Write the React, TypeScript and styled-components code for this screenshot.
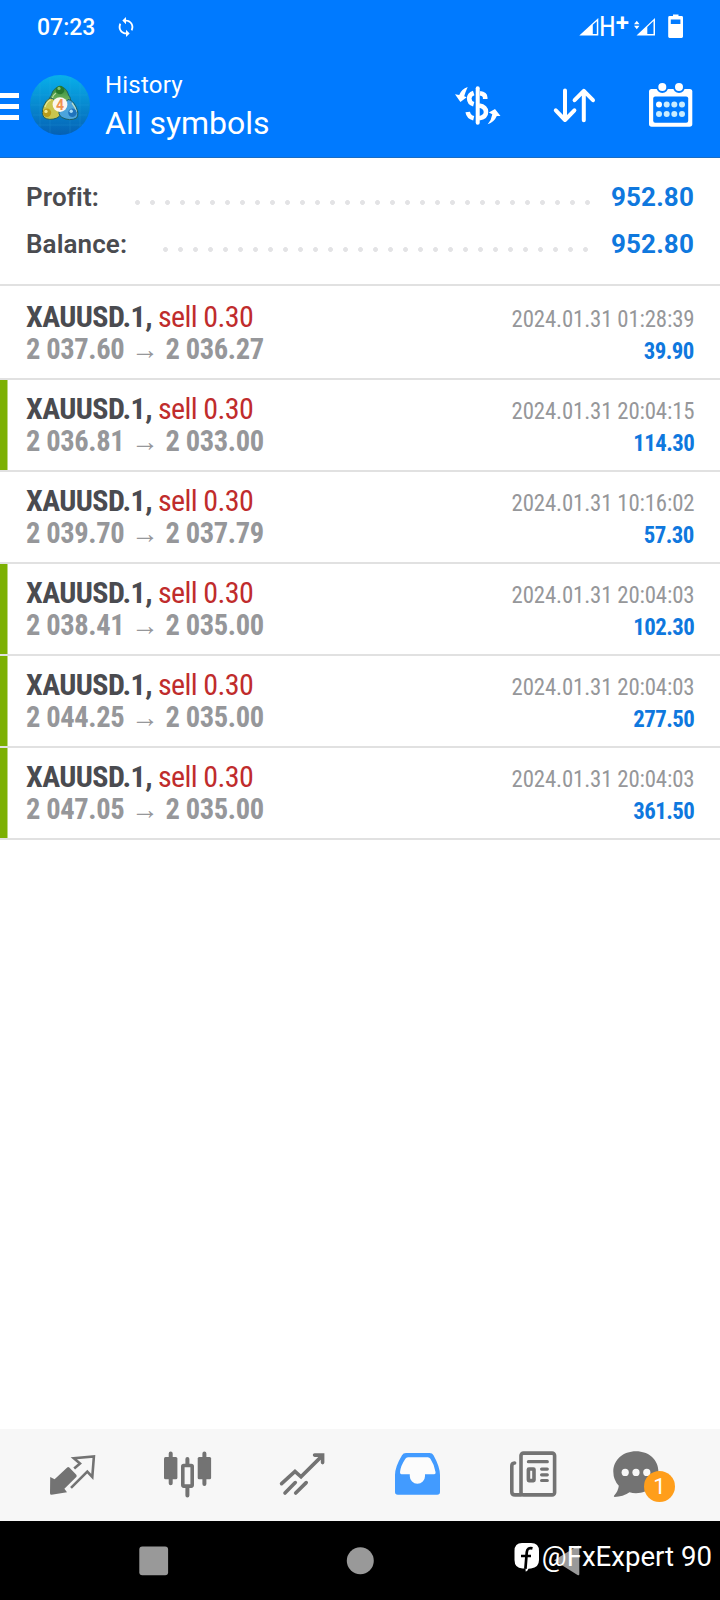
import React from 'react';
import styled, { createGlobalStyle } from 'styled-components';
import { MdSync } from 'react-icons/md';

const GlobalStyle = createGlobalStyle`
  * { box-sizing: border-box; }
  body { margin: 0; background: #fff; font-family: Roboto, "Liberation Sans", sans-serif; }
  svg { display: block; flex: none; overflow: visible; }
`;

const Screen = styled.div`
  display: flex;
  flex-direction: column;
  width: 720px;
  height: 1600px;
  overflow: hidden;
  background: #fff;
`;

/* ---------- header ---------- */

const Header = styled.header`
  height: 158px;
  background: #007aff;
  border-bottom: 1px solid #1a6dc4;
  color: #fff;
`;

const StatusBar = styled.div`
  display: flex;
  align-items: center;
  height: 54px;
  padding: 0 36px 0 37px;
`;

const Clock = styled.span`
  padding-top: 2px;
  font-size: 23px;
  font-weight: 500;
  line-height: 52px;
  width: 78px;
`;

const StatusIcons = styled.div`
  display: flex;
  align-items: center;
  margin-left: auto;
`;

const NetworkType = styled.span`
  display: flex;
  align-items: flex-start;
  width: 34px;
  font-family: "Roboto Condensed", Roboto, sans-serif;
  font-size: 27px;
  line-height: 30px;
`;

const NetworkLetter = styled.span`
  margin-left: -2px;
`;

const NetworkPlus = styled.span`
  font-family: Roboto, sans-serif;
  font-size: 24px;
  font-weight: 600;
  line-height: 23px;
`;

const BatteryGap = styled.span`
  margin-left: 11px;
`;

const Toolbar = styled.div`
  display: flex;
  align-items: flex-start;
  height: 103px;
  padding-right: 26px;
`;

const Hamburger = styled.button`
  display: flex;
  flex-direction: column;
  gap: 6px;
  width: 19px;
  margin: 39px 11px 0 0;
  padding: 0;
  border: 0;
  background: none;
`;

const HamburgerBar = styled.span`
  height: 5px;
  background: #fff;
`;

const Logo = styled.div`
  margin-top: 21.4px;
`;

const Titles = styled.div`
  margin: 17px auto 0 15px;
`;

const Subtitle = styled.div`
  font-size: 24px;
  line-height: 28px;
  letter-spacing: 0.2px;
  margin-bottom: 4px;
`;

const Title = styled.div`
  font-size: 32px;
  line-height: 40px;
`;

const Actions = styled.div`
  display: flex;
  align-items: center;
  gap: 49px;
  padding-top: 28px;
`;

/* ---------- summary ---------- */

const Summary = styled.section`
  height: 128px;
  padding: 16px 26px 0;
  border-bottom: 2px solid #e1e1e1;
`;

const SummaryRow = styled.div`
  display: flex;
  height: 47px;
  font-size: 26px;
  line-height: 47px;
`;

const SummaryLabel = styled.span`
  color: #4a4b50;
  font-weight: 600;
  letter-spacing: 0.1px;
`;

const Dots = styled.span`
  flex: 1;
  margin: 21px 16px 0 31px;
  height: 15px;
  background: radial-gradient(circle at 50% 50%, #e3e3e5 2.1px, transparent 2.8px) 0 0 / 15px 15px repeat-x;
`;

const SummaryValue = styled.span`
  color: #0f78de;
  font-weight: 700;
  letter-spacing: 0.15px;
`;

/* ---------- deals ---------- */

const Deal = styled.article<{ $marked: boolean; $first: boolean }>`
  height: ${(p) => (p.$first ? 94 : 92)}px;
  padding: ${(p) => (p.$first ? 15 : 13)}px 26px 0;
  border-bottom: 2px solid #e1e1e1;
  background: ${(p) => (p.$marked ? 'linear-gradient(#7cb003, #7cb003) 0 0 / 7.5px 100% no-repeat' : 'none')};
  font-family: "Roboto Condensed", Roboto, sans-serif;
`;

const DealLine = styled.div`
  display: flex;
  align-items: baseline;
  justify-content: space-between;
  height: 32px;
  line-height: 32px;
  font-size: 30px;
  white-space: pre;
`;

const Symbol = styled.span`
  color: #4a4b50;
  font-weight: 700;
  letter-spacing: -0.6px;
`;

const Side = styled.span`
  color: #c02c2c;
  letter-spacing: -0.6px;
  margin-left: 6px;
`;

const Prices = styled.span`
  display: flex;
  align-items: baseline;
  color: #96979a;
  font-weight: 700;
  letter-spacing: -0.4px;
  transform: scaleX(0.95);
  transform-origin: left;
`;

const PriceArrow = styled.span`
  width: 43.5px;
  font-size: 29px;
  font-weight: 400;
  text-align: center;
`;

const Time = styled.span`
  color: #96979a;
  font-size: 24px;
  letter-spacing: -0.15px;
  transform: scaleX(0.95);
  transform-origin: right;
`;

const Amount = styled.span`
  color: #0f78de;
  font-size: 24px;
  font-weight: 700;
  letter-spacing: -0.55px;
  transform: scaleX(0.95);
  transform-origin: right;
`;

/* ---------- bottom bars ---------- */

const Tabs = styled.nav`
  display: flex;
  justify-content: center;
  align-items: center;
  height: 92px;
  margin-top: auto;
  background: #f7f7f7;
`;

const Tab = styled.button`
  position: relative;
  display: flex;
  justify-content: center;
  width: 115px;
  padding: 0;
  border: 0;
  background: none;
`;

const Badge = styled.span`
  position: absolute;
  left: 54px;
  top: 21px;
  width: 31px;
  height: 31px;
  border-radius: 50%;
  background: #ff9e1b;
  color: #fff;
  font: 400 22px/32px Roboto, sans-serif;
  text-align: center;
`;

const SystemNav = styled.div`
  position: relative;
  display: flex;
  align-items: center;
  justify-content: center;
  height: 79px;
  background: #000;
`;

const SystemKey = styled.span`
  display: flex;
  justify-content: center;
  width: 206.5px;
`;

const Watermark = styled.div`
  position: absolute;
  right: 8px;
  top: 20px;
  display: flex;
  align-items: center;
  gap: 2px;
  color: #fff;
  font-size: 27.6px;
  font-weight: 400;
  line-height: 32px;
  white-space: pre;
`;

/* ---------- icons ---------- */

const SignalIcon = ({ active }: { active?: boolean }) => (
  <svg width="22" height="20" viewBox="0 0 22 20" fill="#fff">
    {active ? (
      <>
        <path d="M1.5 18.6L20 1V18.6ZM12.3 10V17H18.5V4Z" fillRule="evenodd" />
        <path d="M-1 7.3L1.8 3.8L4.5 7.3ZM-1 8.8H4.5L1.8 12.3Z" />
      </>
    ) : (
      <path d="M.3 18.6L19.3 1V18.6ZM13.8 7.8V17H17.8V4.2Z" fillRule="evenodd" />
    )}
  </svg>
);

const BatteryIcon = () => (
  <svg width="16" height="26" viewBox="0 0 16 26" fill="#fff">
    <path d="M5 .5H10.5V2H13.6Q15 2 15 3.4V22.6Q15 24 13.6 24H1.6Q.2 24 .2 22.6V3.4Q.2 2 1.6 2H5ZM2.8 5.6V10H12.4V5.6Z" fillRule="evenodd" />
  </svg>
);

const AppLogo = () => (
  <svg width="60" height="60" viewBox="0 0 60 60">
    <defs>
      <linearGradient id="sky" x1="0" y1="0" x2="0" y2="1">
        <stop offset="0" stopColor="#08b0ea" />
        <stop offset=".5" stopColor="#0789cf" />
        <stop offset="1" stopColor="#0560b4" />
      </linearGradient>
      <linearGradient id="green" x1="0" y1="0" x2="0" y2="1">
        <stop offset="0" stopColor="#318b3a" />
        <stop offset="1" stopColor="#93ca72" />
      </linearGradient>
    </defs>
    <circle cx="30" cy="30" r="30" fill="url(#sky)" />
    <path d="M3 20H57M1 30H59M3 40H57M7 50H53M10 8V52M20 2V58M40 2V58M50 8V52" stroke="#3fb9ee" strokeWidth=".7" opacity=".22" />
    <g stroke="#1d5f62" strokeWidth="1">
      <path d="M30 12C35 12 37.5 16 38.5 20C40.5 22 41 25 40.5 28L37 33H23L19.5 28C19 25 19.5 22 21.5 20C22.5 16 25 12 30 12Z" fill="url(#green)" />
      <path d="M20 23Q25 23 30 32Q33 40 27 43Q19 46 14 42.5Q11 38 13.5 31Q16 25 20 23Z" fill="#c8c54d" />
      <path d="M38 24.5Q43 25 46 32Q49.5 39 46.5 43Q40 46.5 32 42.5Q27 39 30 34Z" fill="#4ba4dc" />
    </g>
    <path d="M15 32Q17 26 21 25M22.5 23Q23 20 26 18M42 28Q45.5 32 46.5 37" stroke="#ecf5c5" strokeWidth="1.2" fill="none" opacity=".7" />
    <circle cx="30" cy="15" r="4.3" fill="#27792d" />
    <circle cx="29" cy="13.4" r="1.6" fill="#82c170" />
    <circle cx="17" cy="37.8" r="4.2" fill="#b79b1c" />
    <circle cx="16" cy="36.4" r="1.7" fill="#f3e98f" />
    <circle cx="42.4" cy="37.8" r="4.2" fill="#1f73bc" />
    <circle cx="41.2" cy="36.2" r="1.7" fill="#a8dcf7" />
    <circle cx="30" cy="29.6" r="7.4" fill="#fbf6ef" />
    <text x="30" y="34.6" textAnchor="middle" fontFamily="Roboto" fontWeight="700" fontSize="14" fill="#f0924f">4</text>
  </svg>
);

const CurrencyIcon = () => (
  <svg width="50" height="44" viewBox="0 0 50 44">
    <path d="M32.2 15V13.5Q32 9.8 27 9.3M20.7 9Q16.2 10.5 16.2 14.6Q16.2 19 20.7 20.2M26 21.6Q33 22.8 33 28Q33 33.3 26 34.2M14.7 28Q15.5 33 20.7 34.2" fill="none" stroke="#fff" strokeWidth="4.6" />
    <path d="M24.7 4.3V38.7" stroke="#fff" strokeWidth="4" strokeLinecap="round" />
    <path d="M14.7 3Q12.4 8 11.2 12.2L13.7 13.3L7.4 18L2 10.2L6.2 11Q8.5 5 14.7 3ZM34.7 40.3Q38.5 36 39.3 30.3L35.8 28.5L42 25L47.5 32L43.8 32.1Q41 38.5 34.7 40.3Z" fill="#fff" />
  </svg>
);

const SortIcon = () => (
  <svg width="46" height="40" viewBox="0 0 46 40" fill="none" stroke="#fff" strokeWidth="4" strokeLinecap="round" strokeLinejoin="round">
    <path d="M13 4.5V34M3.8 24.3L13 34L22.4 24.3M31.8 34.3V5M22.6 14.2L31.8 4.8L41 14.2" />
  </svg>
);

const CalendarIcon = () => (
  <svg width="47" height="47" viewBox="0 0 47 47">
    <path d="M4.5 7H42.8Q45.3 7 45.3 9.5V42Q45.3 44.7 42.6 44.7H4.7Q2 44.7 2 42V9.5Q2 7 4.5 7Z" fill="#fff" />
    <rect x="6.2" y="14.6" width="35" height="26.2" rx="2" fill="#007aff" />
    {[15.3, 32].map((x) => (
      <circle key={x} cx={x} cy="5" r="5" fill="#fff" stroke="#007aff" strokeWidth="2" />
    ))}
    {[12, 19.7, 27.3, 35].map((x) =>
      [22.5, 32].map((y) => (
        <circle key={`${x}-${y}`} cx={x} cy={y} r="3" fill={x === 12 && y === 22.5 ? '#fff' : '#c9ecff'} />
      )),
    )}
  </svg>
);

const QuotesIcon = () => (
  <svg width="51" height="50" viewBox="0 0 51 50">
    <path d="M3.2 27L7.6 29.2L20.2 17.4Q21.3 16.6 22.3 17.6L29.3 24.8Q30.2 26 29.3 27L17.4 38.8L20 42.3L4.5 44.8Q3 44.8 3 43.3Z" fill="#737373" />
    <path d="M27.2 18.6L33 13.6L26.8 8.2L46.9 6.4L45.3 27L40.3 21.6L24 37.8" fill="none" stroke="#737373" strokeWidth="2.6" />
  </svg>
);

const ChartIcon = () => (
  <svg width="51" height="50" viewBox="0 0 51 50">
    <path d="M8.7 3.5V33.3M42.4 3.5V34M25.4 9V14M25.4 38V45.5" stroke="#737373" strokeWidth="4" strokeLinecap="round" />
    <rect x="2" y="7" width="13.4" height="22.2" rx="1.5" fill="#737373" />
    <rect x="35.7" y="7" width="13.4" height="22.2" rx="1.5" fill="#737373" />
    <rect x="20.8" y="15.5" width="9.4" height="20.6" rx="1" fill="#f7f7f7" stroke="#737373" strokeWidth="3.6" />
  </svg>
);

const TradeIcon = () => (
  <svg width="51" height="50" viewBox="0 0 51 50" fill="none" stroke="#737373" strokeWidth="3.6" strokeLinecap="round">
    <path d="M4.6 33.7L18 21.5L24 26.8L45.3 5.6M37.6 5.1H45.6V12.6M18.3 32.6L8 43M29.2 32.6L18.7 43" />
  </svg>
);

const trayHole =
  'M16 7.2Q14.2 7.2 13.4 8.8Q8.5 16 8 22.2Q8 24.2 9.5 24.2H17.8V26.2A7.6 7.6 0 0 0 33 26.2V24.2H42.2Q43.8 24.2 43.6 22.2Q42.5 15 38.4 8.8Q37.5 7.2 35.8 7.2Z';

const HistoryIcon = () => (
  <svg width="51" height="50" viewBox="0 0 51 50">
    <path d="M14 3H37.5Q40.4 3 41.5 5.3Q48 17 48 25V42Q48 44.8 45.2 44.8H5.8Q3 44.8 3 42V25Q3 17 10 5.3Q11.2 3 14 3Z" fill="#429bff" />
    <path d={trayHole} fill="#fcfcfc" />
  </svg>
);

const NewsIcon = () => (
  <svg width="51" height="50" viewBox="0 0 51 50" fill="none" stroke="#737373" strokeWidth="3.6" strokeLinecap="round">
    <rect x="14" y="3.1" width="33.6" height="41.8" rx="2.5" />
    <path d="M7.6 13Q4.8 13.2 4.8 16V42Q4.8 44.9 8 44.9H14" />
    <path d="M21.4 11.7H40.3M34.6 19.1H40.3M34.6 24.8H40.3M34.6 30.5H40.3" strokeWidth="3.2" />
    <rect x="21.4" y="19" width="5.6" height="11.6" rx=".5" strokeWidth="3.6" />
  </svg>
);

const ChatIcon = () => (
  <svg width="70" height="50" viewBox="0 0 70 50">
    <path d="M23 1.3C36 1.3 45.4 10 45.4 21.5C45.4 34 36 43.2 23 43.2Q19.5 43.2 16.5 42.2Q10 46.8 1.5 46.9Q.3 46.6 1.2 45.6Q5.3 41 5.8 35.8Q.3 30 .3 21.5C.3 10 10 1.3 23 1.3Z" fill="#737373" />
    {[12.2, 23, 33.8].map((x) => (
      <circle key={x} cx={x} cy="22.4" r="3.6" fill="#f7f7f7" />
    ))}
  </svg>
);

const PageIcon = () => (
  <svg width="26" height="30" viewBox="0 0 26 30">
    <path d="M8 1H17Q25 1 25 9V18Q25 25.6 17 26.4L14.5 26.8Q13.5 29.4 11.6 29.6Q12 27.3 11 26.6H8.5Q.5 26 .5 18V9Q.5 1 8 1Z" fill="#fff" />
    <path d="M18.5 6.4Q13.4 5.2 12.8 10L11.4 26.8M7 14H17" fill="none" stroke="#000" strokeWidth="2.7" />
  </svg>
);

/* ---------- data ---------- */

const summary = [
  { label: 'Profit:', value: '952.80' },
  { label: 'Balance:', value: '952.80' },
];

const deals = [
  { open: '2 037.60', close: '2 036.27', time: '2024.01.31 01:28:39', amount: '39.90', marked: false },
  { open: '2 036.81', close: '2 033.00', time: '2024.01.31 20:04:15', amount: '114.30', marked: true },
  { open: '2 039.70', close: '2 037.79', time: '2024.01.31 10:16:02', amount: '57.30', marked: false },
  { open: '2 038.41', close: '2 035.00', time: '2024.01.31 20:04:03', amount: '102.30', marked: true },
  { open: '2 044.25', close: '2 035.00', time: '2024.01.31 20:04:03', amount: '277.50', marked: true },
  { open: '2 047.05', close: '2 035.00', time: '2024.01.31 20:04:03', amount: '361.50', marked: true },
];

export default function App() {
  return (
    <Screen>
      <GlobalStyle />
      <Header>
        <StatusBar>
          <Clock>07:23</Clock>
          <MdSync size={22} />
          <StatusIcons>
            <SignalIcon />
            <NetworkType>
              <NetworkLetter>H</NetworkLetter>
              <NetworkPlus>+</NetworkPlus>
            </NetworkType>
            <SignalIcon active />
            <BatteryGap>
              <BatteryIcon />
            </BatteryGap>
          </StatusIcons>
        </StatusBar>
        <Toolbar>
          <Hamburger aria-label="Menu">
            <HamburgerBar />
            <HamburgerBar />
            <HamburgerBar />
          </Hamburger>
          <Logo>
            <AppLogo />
          </Logo>
          <Titles>
            <Subtitle>History</Subtitle>
            <Title>All symbols</Title>
          </Titles>
          <Actions>
            <CurrencyIcon />
            <SortIcon />
            <CalendarIcon />
          </Actions>
        </Toolbar>
      </Header>

      <Summary>
        {summary.map((s) => (
          <SummaryRow key={s.label}>
            <SummaryLabel>{s.label}</SummaryLabel>
            <Dots />
            <SummaryValue>{s.value}</SummaryValue>
          </SummaryRow>
        ))}
      </Summary>

      {deals.map((d, i) => (
        <Deal key={d.open} $marked={d.marked} $first={i === 0}>
          <DealLine>
            <span>
              <Symbol>XAUUSD.1,</Symbol>
              <Side>sell 0.30</Side>
            </span>
            <Time>{d.time}</Time>
          </DealLine>
          <DealLine>
            <Prices>
              {d.open}
              <PriceArrow>→</PriceArrow>
              {d.close}
            </Prices>
            <Amount>{d.amount}</Amount>
          </DealLine>
        </Deal>
      ))}

      <Tabs>
        <Tab><QuotesIcon /></Tab>
        <Tab><ChartIcon /></Tab>
        <Tab><TradeIcon /></Tab>
        <Tab><HistoryIcon /></Tab>
        <Tab><NewsIcon /></Tab>
        <Tab>
          <ChatIcon />
          <Badge>1</Badge>
        </Tab>
      </Tabs>

      <SystemNav>
        <SystemKey>
          <svg width="30" height="30" viewBox="0 0 30 30"><rect x=".3" y=".5" width="28.8" height="28.8" rx="3" fill="#999" /></svg>
        </SystemKey>
        <SystemKey>
          <svg width="30" height="30" viewBox="0 0 30 30"><circle cx="15.3" cy="14.8" r="13.5" fill="#999" /></svg>
        </SystemKey>
        <SystemKey>
          <svg width="30" height="32" viewBox="0 0 30 32"><path d="M2 15.3L25.5 1Q27.3 .2 27.3 1.8V29.3Q27.3 30.9 25.5 30.1Z" fill="#999" /></svg>
        </SystemKey>
        <Watermark>
          <PageIcon />
          <span>@FxExpert 90</span>
        </Watermark>
      </SystemNav>
    </Screen>
  );
}
